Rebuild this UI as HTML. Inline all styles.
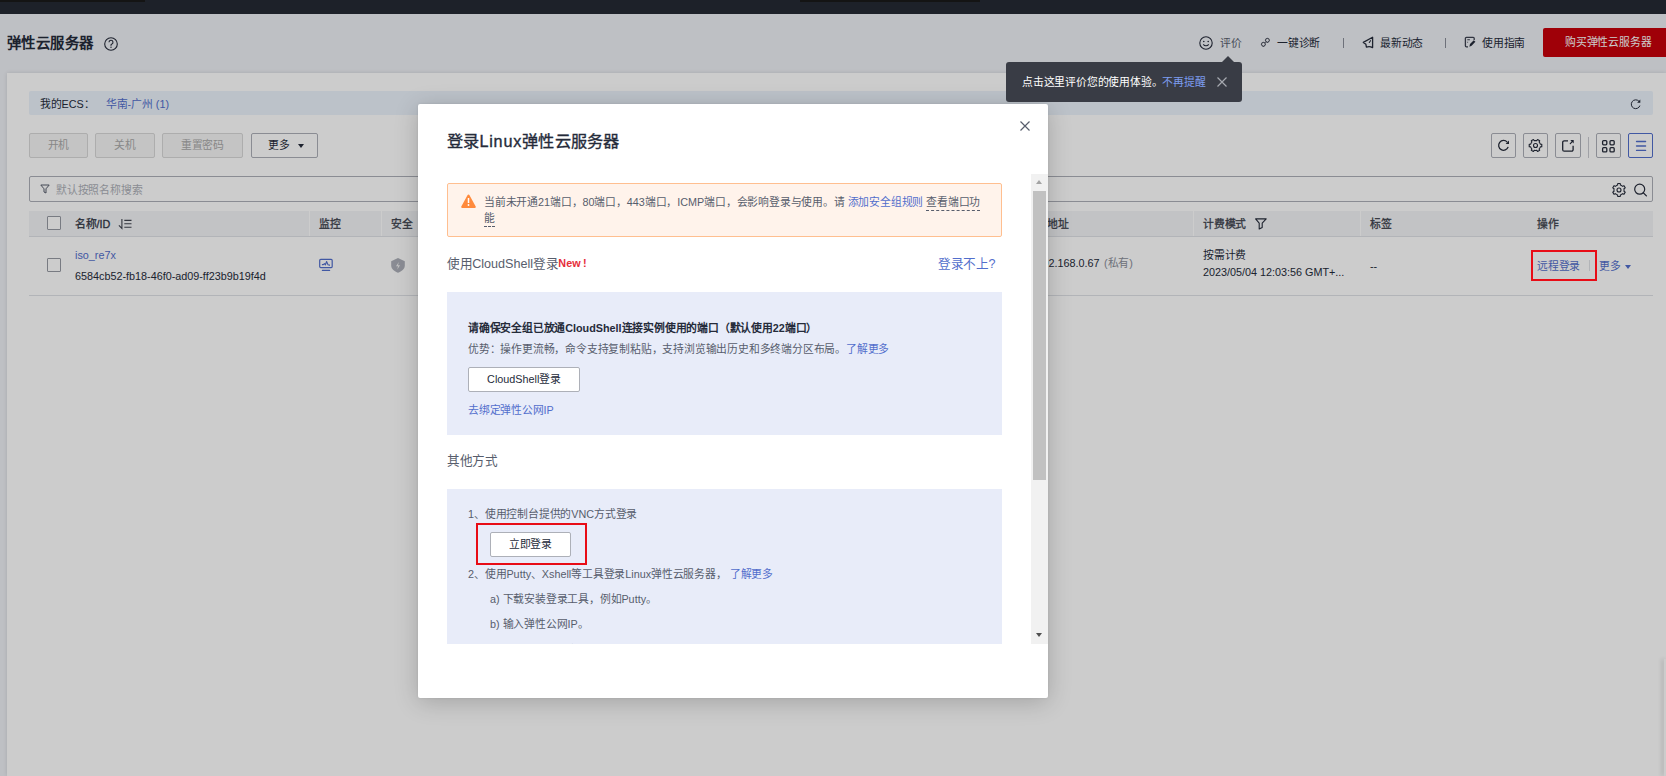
<!DOCTYPE html>
<html lang="zh-CN"><head><meta charset="utf-8">
<style>
*{margin:0;padding:0;box-sizing:border-box}
html,body{width:1666px;height:776px;overflow:hidden}
body{position:relative;background:#eef0f5;font-family:"Liberation Sans",sans-serif;font-size:10.8px;color:#252b3a}
.a{position:absolute;white-space:nowrap}
i.k{font-style:normal;letter-spacing:-0.2px}
.f126 i.k{letter-spacing:-0.4px}
.f144 i.k{letter-spacing:0.4px}
.f162 i.k{letter-spacing:0.2px}
#topbar{left:0;top:0;width:1666px;height:14px;background:#252a34}
#hdr{left:0;top:14px;width:1666px;height:59px;background:#eef0f5}
#panel{left:7px;top:73px;width:1659px;height:703px;background:#fff;box-shadow:0 0 4px rgba(0,0,0,0.12)}
.btn{position:absolute;height:25px;border:1px solid #d9d9d9;border-radius:2px;background:#f5f5f5;color:#aaa;text-align:center;line-height:23px;font-size:10.8px}
.ibtn{position:absolute;top:133px;width:25px;height:25px;border:1px solid #adb0b8;border-radius:2px;background:#fff}
.ibtn svg{position:absolute;left:5px;top:5px}
#overlay{left:0;top:0;width:1666px;height:776px;background:rgba(0,0,0,0.2)}
#modal{left:418px;top:104px;width:630px;height:594px;background:#fff;border-radius:2px;box-shadow:0 4px 24px rgba(0,0,0,0.2),0 0 3px rgba(0,0,0,0.08);overflow:hidden}
#tip{left:1006px;top:62px;width:236px;height:40px;background:#393c45;border-radius:3px}
</style></head><body>
<div id="topbar" class="a">
  <div class="a" style="left:0;top:0;width:145px;height:2px;background:#1a1a1a"></div>
  <div class="a" style="left:800px;top:0;width:180px;height:2px;background:#1a1a1a"></div>
</div>
<div id="hdr" class="a">
  <div class="a f144" style="left:7px;top:19px;font-size:14.4px;font-weight:bold;line-height:20px;color:#252b3a"><i class="k">弹性云服务器</i></div>
  <svg class="a" style="left:104px;top:23px" width="14" height="14" viewBox="0 0 14 14"><circle cx="7" cy="7" r="6.3" fill="none" stroke="#252b3a" stroke-width="1.1"/><path d="M5 5.3a2 2 0 1 1 2.6 1.9c-.4.2-.6.5-.6.9v.7" fill="none" stroke="#252b3a" stroke-width="1.1"/><circle cx="7" cy="10.3" r=".7" fill="#252b3a"/></svg>
  <svg class="a" style="left:1199px;top:22px" width="14" height="14" viewBox="0 0 14 14"><circle cx="7" cy="7" r="6.2" fill="none" stroke="#252b3a" stroke-width="1.1"/><circle cx="4.8" cy="5.5" r=".8" fill="#252b3a"/><circle cx="9.2" cy="5.5" r=".8" fill="#252b3a"/><path d="M4.3 8.3c1.4 1.9 4 1.9 5.4 0" fill="none" stroke="#252b3a" stroke-width="1.1"/></svg>
  <div class="a" style="left:1220px;top:21px;line-height:16px;color:#575d6c"><i class="k">评价</i></div>
  <svg class="a" style="left:1259px;top:22px" width="12" height="12" viewBox="0 0 12 12"><g fill="none" stroke="#4a4f5c" stroke-width="1"><rect x="6.6" y="2.5" width="3.6" height="3.6" rx="1.3" transform="rotate(45 8.4 4.3)"/><rect x="2.6" y="6.5" width="3.6" height="3.6" rx="1.3" transform="rotate(45 4.4 8.3)"/><path d="M5.7 7l1.4-1.4"/></g></svg>
<div class="a" style="left:1277px;top:21px;line-height:16px;color:#252b3a"><i class="k">一键诊断</i></div>
  <div class="a" style="left:1343px;top:24px;width:1px;height:10px;background:#8a8e99"></div>
  <svg class="a" style="left:1361px;top:21px" width="14" height="14" viewBox="0 0 14 14"><path d="M2.3 7.4L11.6 2.2V12.6Q8.6 10.9 5.4 12.1L4.9 9.3Z" fill="none" stroke="#252b3a" stroke-width="1.3" stroke-linejoin="round"/><path d="M8.3 7.5L9.5 5.7" stroke="#252b3a" stroke-width="1.1" stroke-linecap="round"/></svg>
<div class="a" style="left:1380px;top:21px;line-height:16px;color:#252b3a"><i class="k">最新动态</i></div>
  <div class="a" style="left:1445px;top:24px;width:1px;height:10px;background:#8a8e99"></div>
  <svg class="a" style="left:1464px;top:22px" width="12" height="12" viewBox="0 0 12 12"><path d="M10.2 4V2.3a1 1 0 0 0-1-1H2.4a1 1 0 0 0-1 1v7.5a1 1 0 0 0 1 1H4" fill="none" stroke="#3d4250" stroke-width="1.3"/><path d="M3.3 3.7h2.6M3.3 6.3h.8" stroke="#3d4250" stroke-width="1.1"/><path d="M5.4 10.7L6 8.1L9.8 4.3L11.4 5.8L7.6 9.7Z" fill="#252b3a"/></svg>
<div class="a" style="left:1482px;top:21px;line-height:16px;color:#252b3a"><i class="k">使用指南</i></div>
  <div class="a" style="left:1543px;top:14px;width:130px;height:29px;background:#c7000b;border-radius:2px;color:#fff;line-height:29px;padding-left:22px"><i class="k">购买弹性云服务器</i></div>
</div>
<div id="panel" class="a"></div>
<div class="a" style="left:29px;top:91px;width:1624px;height:24px;background:#ebf3fc;border-radius:2px"></div>
<div class="a" style="left:40px;top:97px;line-height:14px;color:#252b3a"><i class="k">我的</i>ECS<i class="k">：</i></div>
<div class="a" style="left:106px;top:97px;line-height:14px;color:#526ecc"><i class="k">华南</i>-<i class="k">广州</i> (1)</div>
<svg class="a" style="left:1629.5px;top:99px" width="12" height="11" viewBox="0 0 12 11"><path d="M9.9 6.6A4.4 4.4 0 1 1 8.9 2.2" fill="none" stroke="#252b3a" stroke-width="1"/><path d="M10.3 .6v3.2H7.1z" fill="#252b3a"/></svg>
<div class="btn" style="left:29px;top:133px;width:59px"><i class="k">开机</i></div>
<div class="btn" style="left:95px;top:133px;width:60px"><i class="k">关机</i></div>
<div class="btn" style="left:162px;top:133px;width:81px"><i class="k">重置密码</i></div>
<div class="btn" style="left:251px;top:133px;width:67px;background:#fff;border-color:#adb0b8;color:#252b3a;text-align:left;padding-left:16px"><i class="k">更多</i><span style="position:absolute;left:46px;top:10px;width:0;height:0;border-left:3px solid transparent;border-right:3px solid transparent;border-top:4px solid #252b3a"></span></div>
<div class="ibtn" style="left:1491px"></div>
<svg class="a" style="left:1491px;top:133px" width="25" height="25" viewBox="0 0 25 25"><path d="M16.2 9.1A4.9 4.9 0 1 0 17.2 13.9" fill="none" stroke="#252b3a" stroke-width="1.3"/><path d="M18 7.6V11H14.6z" fill="#252b3a"/></svg>
<div class="ibtn" style="left:1523px"></div>
<svg class="a" style="left:1523px;top:133px" width="25" height="25" viewBox="0 0 25 25"><path d="M16.83 10.00 L17.31 11.12 L18.78 11.28 L18.78 13.72 L17.31 13.88 L16.83 15.00 L16.10 15.97 L16.70 17.33 L14.58 18.55 L13.71 17.35 L12.50 17.50 L11.29 17.35 L10.42 18.55 L8.30 17.33 L8.90 15.97 L8.17 15.00 L7.69 13.88 L6.22 13.72 L6.22 11.28 L7.69 11.12 L8.17 10.00 L8.90 9.03 L8.30 7.67 L10.42 6.45 L11.29 7.65 L12.50 7.50 L13.71 7.65 L14.58 6.45 L16.70 7.67 L16.10 9.03Z" fill="none" stroke="#252b3a" stroke-width="1.1" stroke-linejoin="round"/><circle cx="12.5" cy="12.5" r="2" fill="none" stroke="#252b3a" stroke-width="1.1"/></svg>
<div class="ibtn" style="left:1555px;width:26px"></div>
<svg class="a" style="left:1555px;top:133px" width="26" height="25" viewBox="0 0 26 25"><path d="M13 7.8H9.2a1.5 1.5 0 0 0-1.5 1.5v7.4a1.5 1.5 0 0 0 1.5 1.5h7.4a1.5 1.5 0 0 0 1.5-1.5V12.8" fill="none" stroke="#252b3a" stroke-width="1.3"/><path d="M15.3 10.6l2.4-2.4" stroke="#252b3a" stroke-width="1.2" stroke-linecap="round"/><path d="M18.7 7.1v3.4l-3.4-3.4z" fill="#252b3a"/></svg>
<div class="a" style="left:1588px;top:137px;width:1px;height:21px;background:#c8cad0"></div>
<div class="ibtn" style="left:1596px"></div>
<svg class="a" style="left:1596px;top:133px" width="25" height="25" viewBox="0 0 25 25"><g fill="none" stroke="#252b3a" stroke-width="1.3"><rect x="6.6" y="7.6" width="4.2" height="4.2" rx="1"/><rect x="14" y="7.6" width="4.2" height="4.2" rx="1"/><rect x="6.6" y="14.7" width="4.2" height="4.2" rx="1"/><rect x="14" y="14.7" width="4.2" height="4.2" rx="1"/></g></svg>
<div class="ibtn" style="left:1628px;border-color:#526ecc"></div>
<svg class="a" style="left:1628px;top:133px" width="25" height="25" viewBox="0 0 25 25"><path d="M8.5 8.5h9.1M8.5 13h9.1M8.5 17.4h9.1" stroke="#526ecc" stroke-width="1.3" stroke-linecap="round"/></svg>
<div class="a" style="left:29px;top:176px;width:1624px;height:26px;border:1px solid #adb0b8;border-radius:2px;background:#fff"></div>
<svg class="a" style="left:40px;top:184px" width="10" height="10" viewBox="0 0 10 10"><path d="M.8 1h8.4L6 4.8V9L4 8V4.8z" fill="none" stroke="#575d6c" stroke-width="1"/></svg>
<div class="a" style="left:56px;top:183px;line-height:14px;color:#adb0b8"><i class="k">默认按照名称搜索</i></div>
<svg class="a" style="left:1611px;top:182px" width="16" height="16" viewBox="0 0 16 16"><path d="M5.45 3.58 L6.59 3.10 L6.74 1.52 L9.26 1.52 L9.41 3.10 L10.55 3.58 L11.54 4.33 L12.98 3.67 L14.24 5.85 L12.95 6.77 L13.10 8.00 L12.95 9.23 L14.24 10.15 L12.98 12.33 L11.54 11.67 L10.55 12.42 L9.41 12.90 L9.26 14.48 L6.74 14.48 L6.59 12.90 L5.45 12.42 L4.46 11.67 L3.02 12.33 L1.76 10.15 L3.05 9.23 L2.90 8.00 L3.05 6.77 L1.76 5.85 L3.02 3.67 L4.46 4.33Z" fill="none" stroke="#252b3a" stroke-width="1.1" stroke-linejoin="round"/><circle cx="8" cy="8" r="2" fill="none" stroke="#252b3a" stroke-width="1.1"/></svg>
<svg class="a" style="left:1632px;top:182px" width="16" height="16" viewBox="0 0 16 16"><circle cx="7.7" cy="7.2" r="5" fill="none" stroke="#252b3a" stroke-width="1.2"/><path d="M11.4 10.9l3 3" stroke="#252b3a" stroke-width="1.3" stroke-linecap="round"/></svg>
<div class="a" style="left:29px;top:211px;width:1624px;height:26px;background:#f3f4f7;border-bottom:1px solid #dfe1e6"></div>
<div class="a" style="left:309px;top:211px;width:1px;height:25px;background:#fff"></div>
<div class="a" style="left:381px;top:211px;width:1px;height:25px;background:#fff"></div>
<div class="a" style="left:1193px;top:211px;width:1px;height:25px;background:#fff"></div>
<div class="a" style="left:1360px;top:211px;width:1px;height:25px;background:#fff"></div>
<div class="a" style="left:47px;top:216px;width:14px;height:14px;border:1px solid #969aa3;border-radius:1px;background:#fff"></div>
<div class="a" style="left:75px;top:217px;line-height:14px;color:#40444f;-webkit-text-stroke:0.3px #40444f;color:#252b3a"><i class="k">名称</i>/ID</div>
<svg class="a" style="left:117px;top:217px" width="16" height="14" viewBox="0 0 16 14"><path d="M4.9 1.9V11.5L1.9 8.4M7.3 3.4h7.2M7.3 6.8h7.2M7.3 10.3h7.2" fill="none" stroke="#40444f" stroke-width="1.1"/></svg>
<div class="a" style="left:319px;top:217px;line-height:14px;color:#40444f;-webkit-text-stroke:0.3px #40444f"><i class="k">监控</i></div>
<div class="a" style="left:391px;top:217px;line-height:14px;color:#40444f;-webkit-text-stroke:0.3px #40444f"><i class="k">安全</i></div>
<div class="a" style="left:1037px;top:217px;line-height:14px;color:#40444f;-webkit-text-stroke:0.3px #40444f">IP<i class="k">地址</i></div>
<div class="a" style="left:1203px;top:217px;line-height:14px;color:#40444f;-webkit-text-stroke:0.3px #40444f"><i class="k">计费模式</i></div>
<svg class="a" style="left:1255px;top:218px" width="12" height="12" viewBox="0 0 12 12"><path d="M.6 .9h10.6L7.2 5.1V9.4L4.2 10.9V5.1z" fill="none" stroke="#252b3a" stroke-width="1.1" stroke-linejoin="round"/></svg>
<div class="a" style="left:1370px;top:217px;line-height:14px;color:#40444f;-webkit-text-stroke:0.3px #40444f"><i class="k">标签</i></div>
<div class="a" style="left:1537px;top:217px;line-height:14px;color:#40444f;-webkit-text-stroke:0.3px #40444f"><i class="k">操作</i></div>
<div class="a" style="left:47px;top:258px;width:14px;height:14px;border:1px solid #969aa3;border-radius:1px;background:#fff"></div>
<div class="a" style="left:75px;top:248px;line-height:14px;color:#526ecc">iso_re7x</div>
<div class="a" style="left:75px;top:269px;line-height:14px;color:#252b3a">6584cb52-fb18-46f0-ad09-ff23b9b19f4d</div>
<svg class="a" style="left:318px;top:257px" width="16" height="15" viewBox="0 0 16 15"><rect x="1.7" y="2.4" width="12.5" height="8.2" rx="1" fill="none" stroke="#526ecc" stroke-width="1.2"/><path d="M3.9 7.6h1.5l1-1 1 1.2 1.2-3.3 1.4 3.2 1 .4h1" fill="none" stroke="#526ecc" stroke-width="1.1" stroke-linejoin="round"/><path d="M4.4 13.4h7.2" stroke="#526ecc" stroke-width="1.2" stroke-linecap="round"/></svg>
<svg class="a" style="left:390px;top:257px" width="16" height="17" viewBox="0 0 16 17"><path d="M8 1L14.8 4.3V8.5C14.8 12 11.5 14.5 8 15.8C4.5 14.5 1.2 12 1.2 8.5V4.3Z" fill="#adb0b9"/><path d="M8.8 5L6 9.3H8L7.3 12.6L10 8.3H8Z" fill="#f2f2f3"/></svg>
<div class="a" style="left:1036.5px;top:256px;line-height:14px;color:#252b3a">192.168.0.67 <span style="color:#8a8e99;margin-left:1.5px">(<i class="k">私有</i>)</span></div>
<div class="a" style="left:1203px;top:248px;line-height:14px;color:#252b3a"><i class="k">按需计费</i></div>
<div class="a" style="left:1203px;top:265px;line-height:14px;color:#252b3a">2023/05/04 12:03:56 GMT+...</div>
<div class="a" style="left:1370px;top:259px;line-height:14px;color:#252b3a">--</div>
<div class="a" style="left:1537px;top:259px;line-height:14px;color:#526ecc"><i class="k">远程登录</i></div>
<div class="a" style="left:1589px;top:260px;width:1px;height:11px;background:#dfe1e6"></div>
<div class="a" style="left:1599px;top:259px;line-height:14px;color:#526ecc"><i class="k">更多</i></div>
<div class="a" style="left:1625px;top:265px;width:0;height:0;border-left:3px solid transparent;border-right:3px solid transparent;border-top:4px solid #526ecc"></div>
<div class="a" style="left:29px;top:295px;width:1624px;height:1px;background:#dfe1e6"></div>
<div class="a" style="left:1664px;top:659px;width:2px;height:117px;background:#fff;box-shadow:-2px 0 4px rgba(0,0,0,.2)"></div>
<div id="overlay" class="a"></div>
<div id="modal" class="a">
  <div class="a f162" style="left:29px;top:26px;font-size:16.2px;line-height:22px;font-weight:normal;-webkit-text-stroke:0.35px #252b3a;color:#252b3a"><i class="k">登录</i><span style="letter-spacing:0.8px">Linux</span><i class="k">弹性云服务器</i></div>
  <svg class="a" style="left:602px;top:17px" width="10" height="10" viewBox="0 0 10 10"><path d="M.5.5l9 9M9.5.5l-9 9" stroke="#575d6c" stroke-width="1.2"/></svg>
  <div class="a" style="left:0;top:70px;width:630px;height:470px;overflow:hidden">
    <div class="a" style="left:29px;top:9px;width:555px;height:54px;background:#fff3eb;border:1px solid #ffbf90;border-radius:2px"></div>
    <svg class="a" style="left:43px;top:20px" width="15" height="14" viewBox="0 0 15 14"><path d="M7.5.6a1 1 0 0 1 .9.5l6.3 11.3a1 1 0 0 1-.9 1.5H1.2a1 1 0 0 1-.9-1.5L6.6 1.1a1 1 0 0 1 .9-.5z" fill="#ff8a3c"/><path d="M7.5 4v5" stroke="#fff" stroke-width="1.5"/><circle cx="7.5" cy="11" r=".9" fill="#fff"/></svg>
    <div class="a" style="left:66px;top:20px;line-height:16.2px;color:#575d6c;white-space:normal;width:500px"><i class="k">当前未开通</i>21<i class="k">端口，</i>80<i class="k">端口，</i>443<i class="k">端口，</i>ICMP<i class="k">端口，会影响登录与使用。请</i> <span style="color:#526ecc"><i class="k">添加安全组规则</i></span> <span style="border-bottom:1px dashed #575d6c;padding-bottom:2px"><i class="k">查看端口功能</i></span></div>
    <div class="a f126" style="left:29px;top:81px;font-size:12.6px;line-height:18px;color:#575d6c"><i class="k">使用</i>CloudShell<i class="k">登录</i><span style="color:#e62d3a;font-weight:bold;font-size:10.8px;position:relative;top:-1px">New<span style="margin-left:2.5px">!</span></span></div>
    <div class="a f126" style="left:520px;top:81px;font-size:12.6px;line-height:18px;color:#526ecc"><i class="k">登录不上</i>?</div>
    <div class="a" style="left:29px;top:118px;width:555px;height:143px;background:#e8ecf9"></div>
    <div class="a" style="left:50px;top:147px;line-height:14px;font-weight:bold;color:#252b3a"><i class="k">请确保安全组已放通</i>CloudShell<i class="k">连接实例使用的端口（默认使用</i>22<i class="k">端口）</i></div>
    <div class="a" style="left:50px;top:168px;line-height:14px;color:#575d6c"><i class="k">优势：操作更流畅，命令支持复制粘贴，支持浏览输出历史和多终端分区布局。</i><span style="color:#526ecc"><i class="k">了解更多</i></span></div>
    <div class="a" style="left:50px;top:193px;width:112px;height:25px;background:#fff;border:1px solid #adb0b8;border-radius:2px;line-height:23px;text-align:center;color:#252b3a">CloudShell<i class="k">登录</i></div>
    <div class="a" style="left:50px;top:229px;line-height:14px;color:#526ecc"><i class="k">去绑定弹性公网</i>IP</div>
    <div class="a f126" style="left:29px;top:278px;font-size:12.6px;line-height:18px;color:#575d6c"><i class="k">其他方式</i></div>
    <div class="a" style="left:29px;top:315px;width:555px;height:300px;background:#e8ecf9"></div>
    <div class="a" style="left:50px;top:333px;line-height:14px;color:#575d6c">1<i class="k">、使用控制台提供的</i>VNC<i class="k">方式登录</i></div>
    <div class="a" style="left:72px;top:358px;width:81px;height:25px;background:#fff;border:1px solid #adb0b8;border-radius:2px;line-height:23px;text-align:center;color:#252b3a"><i class="k">立即登录</i></div>
    <div class="a" style="left:50px;top:393px;line-height:14px;color:#575d6c">2<i class="k">、使用</i>Putty<i class="k">、</i>Xshell<i class="k">等工具登录</i>Linux<i class="k">弹性云服务器，</i> <span style="color:#526ecc"><i class="k">了解更多</i></span></div>
    <div class="a" style="left:72px;top:418px;line-height:14px;color:#575d6c">a) <i class="k">下载安装登录工具，例如</i>Putty<i class="k">。</i></div>
    <div class="a" style="left:72px;top:443px;line-height:14px;color:#575d6c">b) <i class="k">输入弹性公网</i>IP<i class="k">。</i></div>
    <div class="a" style="left:72px;top:469px;line-height:14px;color:#575d6c">c) <i class="k">输入用户名和密码，登录弹性云服务器。</i></div>
    <div class="a" style="left:613px;top:0;width:17px;height:470px;background:#f1f1f1"></div>
    <div class="a" style="left:615px;top:17px;width:13px;height:289px;background:#c1c1c1"></div>
    <div class="a" style="left:618px;top:6px;width:0;height:0;border-left:3.5px solid transparent;border-right:3.5px solid transparent;border-bottom:4px solid #a3a3a3"></div>
    <div class="a" style="left:618px;top:459px;width:0;height:0;border-left:3.5px solid transparent;border-right:3.5px solid transparent;border-top:4px solid #505050"></div>
  </div>
</div>
<div class="a" style="left:476px;top:523px;width:111px;height:42px;border:2px solid #e80c16"></div>
<div class="a" style="left:1531px;top:250px;width:66px;height:31px;border:2px solid #e80c16"></div>
<div id="tip" class="a">
  <div class="a" style="left:216px;top:-6px;width:0;height:0;border-left:6px solid transparent;border-right:6px solid transparent;border-bottom:6px solid #393c45"></div>
  <div class="a" style="left:16px;top:13px;line-height:14px;color:#fff"><i class="k">点击这里评价您的使用体验。</i><span style="color:#7d9cf0"><i class="k">不再提醒</i></span></div>
  <svg class="a" style="left:211px;top:15px" width="10" height="10" viewBox="0 0 10 10"><path d="M.5.5l9 9M9.5.5l-9 9" stroke="#a6a9b0" stroke-width="1.2"/></svg>
</div>
</body></html>
